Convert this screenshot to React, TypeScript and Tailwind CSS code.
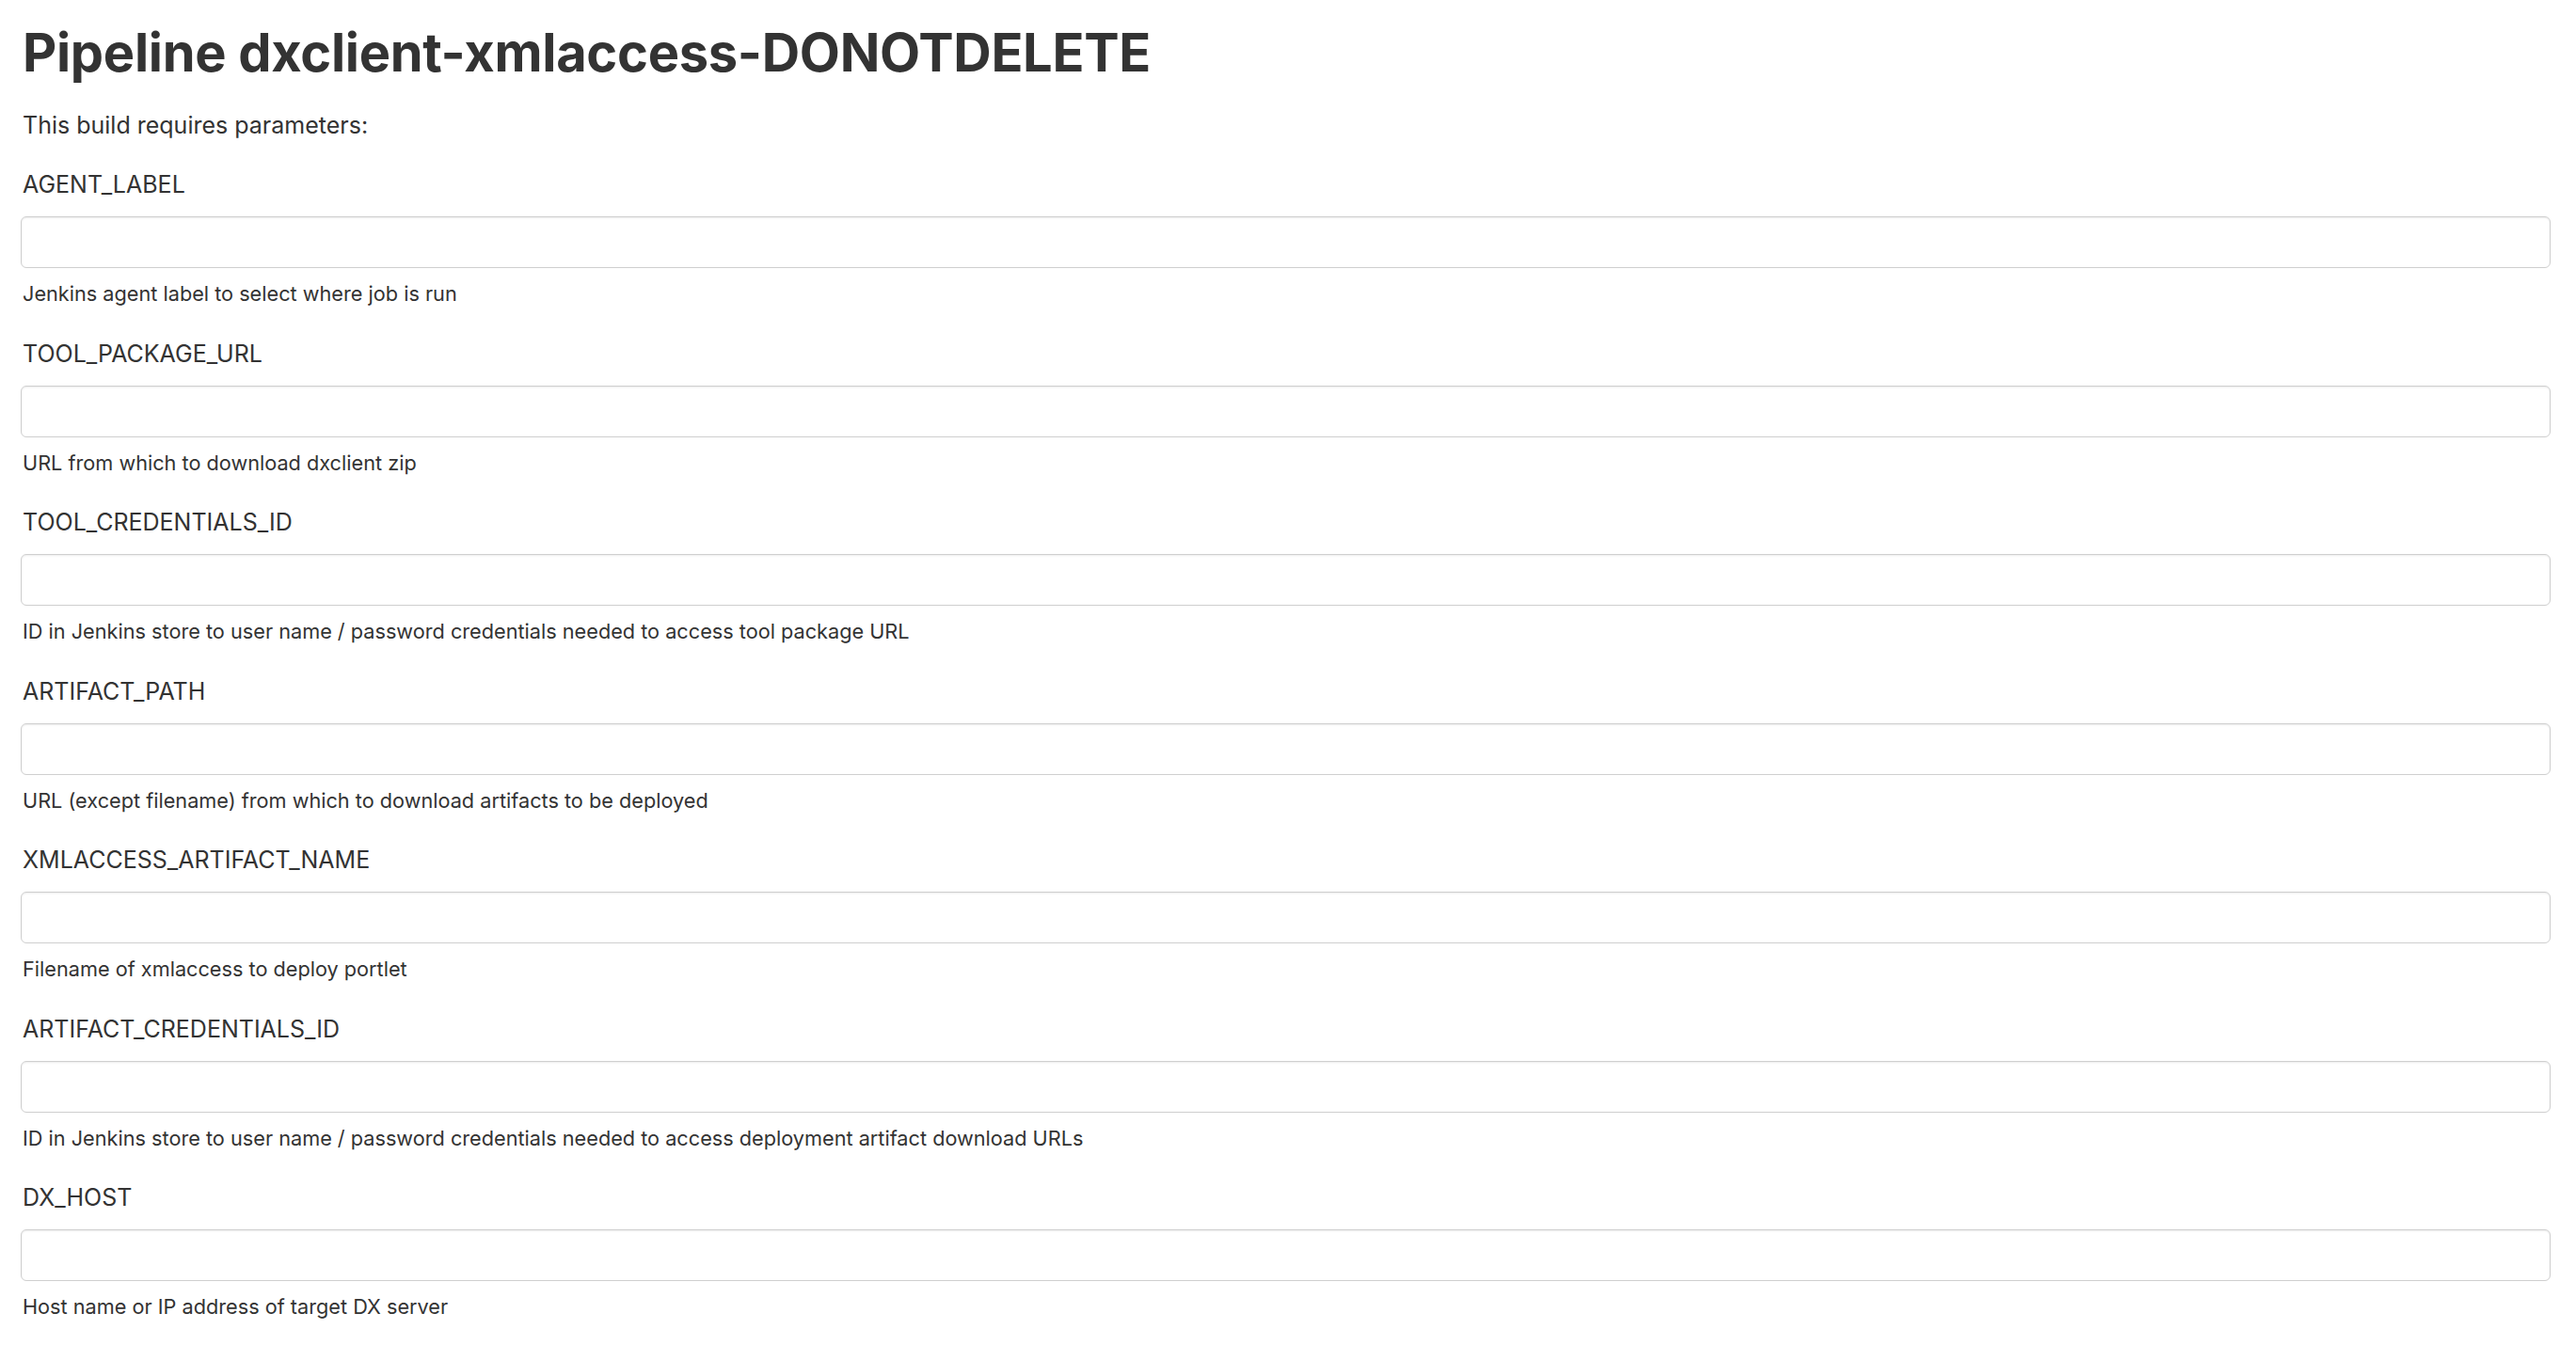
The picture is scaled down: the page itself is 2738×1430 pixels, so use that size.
const params = [
  { name: 'AGENT_LABEL', description: 'Jenkins agent label to select where job is run' },
  { name: 'TOOL_PACKAGE_URL', description: 'URL from which to download dxclient zip' },
  { name: 'TOOL_CREDENTIALS_ID', description: 'ID in Jenkins store to user name / password credentials needed to access tool package URL' },
  { name: 'ARTIFACT_PATH', description: 'URL (except filename) from which to download artifacts to be deployed' },
  { name: 'XMLACCESS_ARTIFACT_NAME', description: 'Filename of xmlaccess to deploy portlet' },
  { name: 'ARTIFACT_CREDENTIALS_ID', description: 'ID in Jenkins store to user name / password credentials needed to access deployment artifact download URLs' },
  { name: 'DX_HOST', description: 'Host name or IP address of target DX server' },
]

function ParamField({ name, description }: { name: string; description: string }) {
  return (
    <div className="flex flex-col">
      {/* Label */}
      <label className="pl-[2px] text-[25px] leading-[30px] text-[#333] mb-[19px]">{name}</label>
      <input
        type="text"
        className="h-[55px] w-full rounded-[6px] border border-[#cfcfcf] bg-white px-3 text-[22px] shadow-[inset_0_1px_2px_rgba(0,0,0,0.08)] outline-none"
      />
      {/* Help text */}
      <div className="mt-[13px] pl-[2px] text-[21.7px] leading-[28px] text-[#333]">{description}</div>
    </div>
  )
}

export default function App() {
  return (
    <div
      className="min-h-screen bg-white pl-[22px] pr-[27px] pt-[26px] text-[#333]"
      style={{ fontFamily: 'Inter, "Noto Sans", "Liberation Sans", sans-serif' }}
    >
      <h1 className="pl-[2px] text-[56px] leading-[60px] font-bold tracking-[-0.3px] text-[#333]">
        Pipeline dxclient-xmlaccess-DONOTDELETE
      </h1>
      <p className="mt-[31px] pl-[2px] text-[25px] leading-[32px]">This build requires parameters:</p>

      <div className="mt-[32px] flex flex-col gap-[34.5px]">
        {params.map((p) => (
          <ParamField key={p.name} name={p.name} description={p.description} />
        ))}
      </div>
    </div>
  )
}
